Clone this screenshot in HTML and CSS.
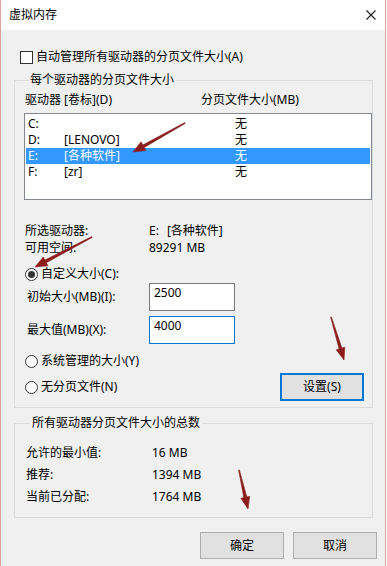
FILE: index.html
```html
<!DOCTYPE html>
<html lang="zh-CN">
<head>
<meta charset="utf-8">
<title>虚拟内存</title>
<link rel="stylesheet" href="styles.css">
</head>
<body>
<div class="window">
  <div class="titlebar">
    <span class="title">虚拟内存</span>
    <svg class="close" width="10" height="10" viewBox="0 0 10 10"><path d="M0.5 0.5L9.5 9.5M9.5 0.5L0.5 9.5" stroke="#1a1a1a" stroke-width="1.1" fill="none"/></svg>
  </div>
  <div class="content">
    <div class="check-row"><span class="checkbox"></span><span>自动管理所有驱动器的分页文件大小(A)</span></div>

    <fieldset class="group group-drives">
      <legend>每个驱动器的分页文件大小</legend>
      <div class="list-header"><span>驱动器 [卷标](D)</span><span>分页文件大小(MB)</span></div>
      <div class="listbox">
        <div class="list-row"><span>C:</span><span></span><span>无</span></div>
        <div class="list-row"><span>D:</span><span>[LENOVO]</span><span>无</span></div>
        <div class="list-row selected"><span>E:</span><span>[各种软件]</span><span>无</span></div>
        <div class="list-row"><span>F:</span><span>[zr]</span><span>无</span></div>
      </div>
      <div class="info">
        <span>所选驱动器:</span><span>E:<span class="vol">[各种软件]</span></span>
        <span>可用空间:</span><span>89291 MB</span>
      </div>
      <div class="radio-row"><span class="radio checked"></span><span>自定义大小(C):</span></div>
      <div class="size-grid">
        <span class="size-label">初始大小(MB)(I):</span><div class="input">2500</div>
        <span class="size-label">最大值(MB)(X):</span><div class="input focused">4000</div>
      </div>
      <div class="bottom-row">
        <div class="radios">
          <div class="radio-row"><span class="radio"></span><span>系统管理的大小(Y)</span></div>
          <div class="radio-row"><span class="radio"></span><span>无分页文件(N)</span></div>
        </div>
        <button class="btn btn-default">设置(S)</button>
      </div>
    </fieldset>

    <fieldset class="group group-total">
      <legend>所有驱动器分页文件大小的总数</legend>
      <div class="totals">
        <span>允许的最小值:</span><span>16 MB</span>
        <span>推荐:</span><span>1394 MB</span>
        <span>当前已分配:</span><span>1764 MB</span>
      </div>
    </fieldset>

    <div class="actions">
      <button class="btn">确定</button>
      <button class="btn">取消</button>
    </div>
  </div>

  <svg class="annotations" width="386" height="566" viewBox="0 0 386 566">
    <polygon points="184.8,122.6 142.8,144.9 141.1,141.8 133,152 145.9,150.6 144.2,147.5 185.2,123.4"/>
    <polygon points="91.8,236.6 44.9,260.1 43.3,257.0 35,267 47.9,265.8 46.3,262.7 92.2,237.4"/>
    <polygon points="330.6,317.1 339.1,348.9 336.2,349.8 344,360 344.8,347.2 341.9,348.1 331.4,316.9"/>
    <polygon points="238.6,470.1 243.8,497.6 240.9,498.3 248,509 249.7,496.3 246.8,497.0 239.4,469.9"/>
  </svg>
</div>
</body>
</html>
```

FILE: styles.css
```css
* {
  box-sizing: border-box;
}

html, body {
  margin: 0;
  padding: 0;
  background: #ffffff;
}

body {
  font-family: "Noto Sans", "Noto Sans CJK SC", sans-serif;
  font-size: 12px;
  line-height: 16px;
  color: #000;
}

.window {
  position: relative;
  width: 386px;
  height: 566px;
  border-left: 1px solid #dba59f;
  border-right: 1px solid #dba59f;
  background: #f0f0f0;
  overflow: hidden;
}

.titlebar {
  height: 30px;
  background: #ffffff;
  display: flex;
  align-items: center;
  justify-content: space-between;
  padding: 0 9px 0 8px;
}

.close {
  display: block;
  margin-top: -1px;
}

.content {
  padding: 19px 8px 0 13px;
}

.check-row {
  display: flex;
  align-items: center;
  height: 16px;
}

.checkbox {
  width: 13px;
  height: 13px;
  border: 1px solid #333;
  background: #fff;
  margin-left: 6px;
  margin-right: 3px;
  flex: none;
}

.group {
  width: 359px;
  min-width: 0;
  margin: 0;
  border: 1px solid #dcdcdc;
}

.group legend {
  padding: 0 2px;
  margin-left: 4px;
  line-height: 16px;
}

.group-drives {
  margin-top: 7px;
  padding: 0 0 6px 9px;
}

.list-header {
  margin-top: 4px;
  padding-left: 1px;
  display: grid;
  grid-template-columns: 176px 1fr;
  height: 16px;
}

.listbox {
  margin-top: 5px;
  height: 87px;
  border: 1px solid #828790;
  background: #fff;
  padding: 2px 1px;
}

.list-row {
  display: grid;
  grid-template-columns: 36px 171px 1fr;
  height: 16px;
  padding-left: 2px;
}

.list-row.selected {
  background: #3399ff;
  color: #fff;
}

.info {
  margin-top: 22px;
  padding-left: 1px;
  display: grid;
  grid-template-columns: 124px 1fr;
  line-height: 17px;
}

.vol {
  margin-left: 8px;
}

.radio-row {
  display: flex;
  align-items: center;
  height: 16px;
}

.group-drives > .radio-row {
  margin-top: 10px;
}

.radio {
  position: relative;
  width: 13px;
  height: 13px;
  border: 1px solid #333;
  border-radius: 50%;
  background: #fff;
  margin-left: 1px;
  margin-right: 3px;
  flex: none;
}

.radio.checked::after {
  content: "";
  position: absolute;
  left: 2px;
  top: 2px;
  width: 7px;
  height: 7px;
  border-radius: 50%;
  background: #333;
}

.size-grid {
  margin-top: 1px;
  display: grid;
  grid-template-columns: 125px 86px;
  grid-auto-rows: 28px;
  row-gap: 5px;
  align-items: center;
}

.size-label {
  padding-left: 3px;
}

.input {
  height: 28px;
  border: 1px solid #7a7a7a;
  background: #fff;
  padding: 1px 4px 0;
  align-self: stretch;
}

.input.focused {
  border-color: #0078d7;
}

.bottom-row {
  margin-top: 9px;
  display: flex;
  justify-content: space-between;
  align-items: flex-start;
  padding-right: 8px;
}

.radios {
  display: flex;
  flex-direction: column;
  gap: 10px;
}

.btn {
  width: 84px;
  height: 27px;
  border: 1px solid #adadad;
  background: #e1e1e1;
  font: inherit;
  color: #000;
  padding: 0;
  margin: 0;
}

.btn-default {
  margin-top: 20px;
  height: 28px;
  border-color: #0078d7;
  box-shadow: inset 0 0 0 1px #0078d7;
}

.group-total {
  margin-top: 7px;
  padding: 0 0 9px 11px;
}

.totals {
  margin-top: 11px;
  display: grid;
  grid-template-columns: 126px 1fr;
  grid-auto-rows: 22px;
  align-items: center;
}

.actions {
  margin-top: 14px;
  display: flex;
  justify-content: flex-end;
  gap: 9px;
}

.annotations {
  position: absolute;
  left: -1px;
  top: 0;
  pointer-events: none;
}

.annotations polygon {
  fill: #8a1c1c;
  stroke: #8a1c1c;
  stroke-width: 0.6;
  stroke-linejoin: round;
}
```
